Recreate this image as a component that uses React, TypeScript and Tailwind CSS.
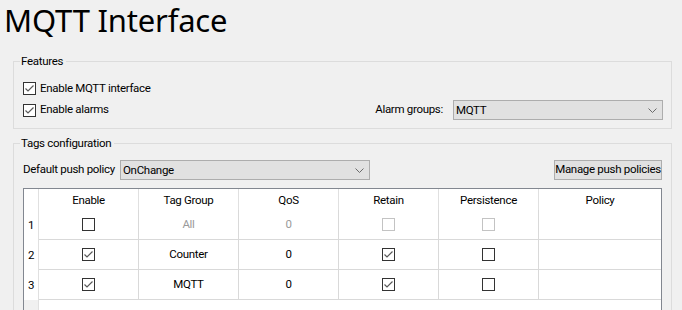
import React from "react";

const FONT = { fontFamily: 'Roboto, "Liberation Sans", sans-serif' };
const TITLE_FONT = { fontFamily: '"Noto Sans", "Open Sans", sans-serif' };

function CheckBox({ checked = false, disabled = false }: { checked?: boolean; disabled?: boolean }) {
  return (
    <span
      className={
        disabled
          ? "inline-flex w-[13px] h-[13px] shrink-0 border border-[#c3c3c3] bg-white"
          : "inline-flex w-[13px] h-[13px] shrink-0 border border-[#333333] bg-white"
      }
    >
      {checked && (
        <svg width="11" height="11" viewBox="0 0 11 11">
          <path d="M1.5 5.5 L4 8 L9.5 2.5" stroke="#5a5a5a" strokeWidth="1.2" fill="none" />
        </svg>
      )}
    </span>
  );
}

function Chevron() {
  return (
    <svg width="9" height="5" viewBox="0 0 9 5" className="shrink-0">
      <path d="M0.5 0.5 L4.5 4.5 L8.5 0.5" stroke="#6a6a6a" strokeWidth="1" fill="none" />
    </svg>
  );
}

function Select({ value, className }: { value: string; className: string }) {
  return (
    <div className={className}>
      <span className="flex-1 leading-[18px] whitespace-nowrap">{value}</span>
      <Chevron />
    </div>
  );
}

const COLS = "grid grid-cols-[15px_100px_100px_100px_100px_100px_122px]";

export default function App() {
  const rows = [
    { n: "1", enable: false, group: "All", qos: "0", retain: false, persist: false, dim: true },
    { n: "2", enable: true, group: "Counter", qos: "0", retain: true, persist: false, dim: false },
    { n: "3", enable: true, group: "MQTT", qos: "0", retain: true, persist: false, dim: false },
  ];
  return (
    <div
      className="w-[682px] h-[310px] overflow-hidden bg-[#f0f0f0] text-black text-[11.5px] tracking-[-0.3px] whitespace-nowrap"
      style={FONT}
    >
      <div className="h-[53px] pl-[4px] tracking-[-0.2px]" style={TITLE_FONT}>
        <div className="text-[31px] leading-[40px]">MQTT Interface</div>
      </div>

      <fieldset className="ml-[13px] w-[659px] border border-[#dcdcdc]">
        <legend className="ml-[6px] pl-[1px] pr-[3px] leading-[16px]">Features</legend>
        <div className="pl-[9px] pr-[8px] pb-[8px]">
          <div className="mt-[11px] h-[17px] flex items-center gap-[4px]">
            <CheckBox checked />
            <span>Enable MQTT interface</span>
          </div>
          <div className="mt-[3px] h-[20px] flex items-center">
            <CheckBox checked />
            <span className="ml-[4px]">Enable alarms</span>
            <span className="ml-auto mr-[10px]">Alarm groups:</span>
            <Select
              value="MQTT"
              className="w-[210px] h-[20px] flex items-center border border-[#adadad] bg-[#e1e1e1] pl-[2px] pr-[5px]"
            />
          </div>
        </div>
      </fieldset>

      <fieldset className="mt-[6px] ml-[13px] w-[659px] border border-[#dcdcdc] pb-[20px]">
        <legend className="ml-[6px] pl-[1px] pr-[3px] leading-[16px]">Tags configuration</legend>
        <div className="px-[9px]">
          <div className="mt-[9px] h-[20px] flex items-center">
            <span className="w-[97px]">Default push policy</span>
            <Select
              value="OnChange"
              className="w-[250px] h-[20px] flex items-center border border-[#adadad] bg-[#e1e1e1] pl-[2px] pr-[5px]"
            />
            <div className="ml-auto w-[108px] h-[20px] flex items-center justify-center border border-[#adadad] bg-[#e1e1e1]">
              Manage push policies
            </div>
          </div>

          <div className="mt-[8px] w-[639px] h-[140px] border border-[#828790] bg-white flex flex-col">
            <div className={`${COLS} h-[21px]`}>
              <div className="border-r border-[#e0e0e0]" />
              {["Enable", "Tag Group", "QoS", "Retain", "Persistence", "Policy"].map((h, i) => (
                <div
                  key={h}
                  className={
                    i === 5
                      ? "flex items-center justify-center leading-[16px]"
                      : "flex items-center justify-center border-r border-[#e0e0e0] leading-[16px]"
                  }
                >
                  {h}
                </div>
              ))}
            </div>
            {rows.map((r) => (
              <div key={r.n} className={`${COLS} h-[30px]`}>
                <div className="flex items-center justify-center border-r border-[#e0e0e0] bg-white pt-[2px]">{r.n}</div>
                <div className="flex items-center justify-center border-r border-b border-[#d9d9d9]">
                  <CheckBox checked={r.enable} />
                </div>
                <div
                  className={
                    r.dim
                      ? "flex items-center justify-center border-r border-b border-[#d9d9d9] text-[#9a9a9a]"
                      : "flex items-center justify-center border-r border-b border-[#d9d9d9]"
                  }
                >
                  {r.group}
                </div>
                <div
                  className={
                    r.dim
                      ? "flex items-center justify-center border-r border-b border-[#d9d9d9] text-[#9a9a9a]"
                      : "flex items-center justify-center border-r border-b border-[#d9d9d9]"
                  }
                >
                  {r.qos}
                </div>
                <div className="flex items-center justify-center border-r border-b border-[#d9d9d9]">
                  <CheckBox checked={r.retain} disabled={r.dim} />
                </div>
                <div className="flex items-center justify-center border-r border-b border-[#d9d9d9]">
                  <CheckBox checked={r.persist} disabled={r.dim} />
                </div>
                <div className="border-b border-[#d9d9d9]" />
              </div>
            ))}
            <div className={`${COLS} flex-1`}>
              <div className="bg-[#f0f0f0] border-r border-[#e0e0e0]" />
              <div className="col-span-6" />
            </div>
          </div>
        </div>
      </fieldset>
    </div>
  );
}
